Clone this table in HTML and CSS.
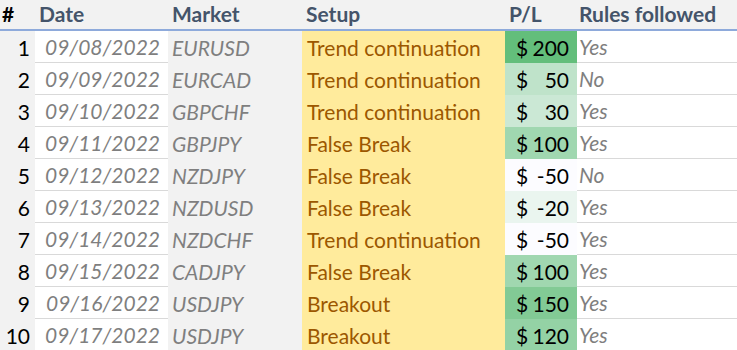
FILE: index.html
```html
<!DOCTYPE html>
<html>
<head>
<meta charset="utf-8">
<link rel="stylesheet" href="styles.css">
</head>
<body>
<div class="sheet">
  <div class="hdr idx">#</div>
  <div class="hdr">Date</div>
  <div class="hdr">Market</div>
  <div class="hdr">Setup</div>
  <div class="hdr">P/L</div>
  <div class="hdr rules-hdr">Rules followed</div>

  <div class="c idx">1</div><div class="c date">09/08/2022</div><div class="c mkt">EURUSD</div><div class="c setup">Trend continuation</div><div class="c pl" style="background:#63be7b"><span>$</span><span>200</span></div><div class="c rule">Yes</div>
  <div class="c idx">2</div><div class="c date">09/09/2022</div><div class="c mkt">EURCAD</div><div class="c setup">Trend continuation</div><div class="c pl" style="background:#bfe3ca"><span>$</span><span>50</span></div><div class="c rule">No</div>
  <div class="c idx">3</div><div class="c date">09/10/2022</div><div class="c mkt">GBPCHF</div><div class="c setup">Trend continuation</div><div class="c pl" style="background:#cbe8d5"><span>$</span><span>30</span></div><div class="c rule">Yes</div>
  <div class="c idx">4</div><div class="c date">09/11/2022</div><div class="c mkt">GBPJPY</div><div class="c setup">False Break</div><div class="c pl" style="background:#a0d7b0"><span>$</span><span>100</span></div><div class="c rule">Yes</div>
  <div class="c idx">5</div><div class="c date">09/12/2022</div><div class="c mkt">NZDJPY</div><div class="c setup">False Break</div><div class="c pl" style="background:#fcfcff"><span>$</span><span>-50</span></div><div class="c rule">No</div>
  <div class="c idx">6</div><div class="c date">09/13/2022</div><div class="c mkt">NZDUSD</div><div class="c setup">False Break</div><div class="c pl" style="background:#eaf5ef"><span>$</span><span>-20</span></div><div class="c rule">Yes</div>
  <div class="c idx">7</div><div class="c date">09/14/2022</div><div class="c mkt">NZDCHF</div><div class="c setup">Trend continuation</div><div class="c pl" style="background:#fcfcff"><span>$</span><span>-50</span></div><div class="c rule">Yes</div>
  <div class="c idx">8</div><div class="c date">09/15/2022</div><div class="c mkt">CADJPY</div><div class="c setup">False Break</div><div class="c pl" style="background:#a0d7b0"><span>$</span><span>100</span></div><div class="c rule">Yes</div>
  <div class="c idx">9</div><div class="c date">09/16/2022</div><div class="c mkt">USDJPY</div><div class="c setup">Breakout</div><div class="c pl" style="background:#82ca95"><span>$</span><span>150</span></div><div class="c rule">Yes</div>
  <div class="c idx">10</div><div class="c date">09/17/2022</div><div class="c mkt">USDJPY</div><div class="c setup">Breakout</div><div class="c pl" style="background:#94d2a5"><span>$</span><span>120</span></div><div class="c rule">Yes</div>
</div>
</body>
</html>
```

FILE: styles.css
```css
html, body {
  margin: 0;
  padding: 0;
  background: #f2f2f2;
}
.sheet {
  display: grid;
  grid-template-columns: 35px 133px 134px 203px 72px 1fr;
  grid-template-rows: 31px repeat(10, 32px);
  font-family: Lato, "Liberation Sans", sans-serif;
  font-size: 21px;
  width: 737px;
}
.hdr {
  box-sizing: border-box;
  border-bottom: 2px solid #8eaadb;
  color: #44546a;
  font-weight: bold;
  display: flex;
  align-items: center;
  padding-left: 4px;
  padding-bottom: 3px;
}
.hdr.idx {
  padding-left: 2px;
}
.hdr.rules-hdr {
  padding-left: 2px;
}
.c {
  box-sizing: border-box;
  display: flex;
  align-items: center;
  white-space: nowrap;
}
.idx {
  justify-content: flex-end;
  padding-right: 5px;
  color: #000;
}
.hdr.idx {
  justify-content: flex-start;
}
.date {
  background: #fff;
  border-bottom: 1px solid #d9d9d9;
  justify-content: flex-end;
  padding-right: 8px;
  color: #7f7f7f;
  font-style: italic;
}
.mkt {
  color: #7f7f7f;
  font-style: italic;
  padding-left: 4px;
}
.setup {
  background: #ffeb9c;
  color: #9c5700;
  padding-left: 5px;
}
.pl {
  color: #000;
  justify-content: space-between;
  padding: 0 8px 0 11px;
}
.rule {
  background: #fff;
  border-bottom: 1px solid #d9d9d9;
  color: #7f7f7f;
  font-style: italic;
  padding-left: 2px;
}
```
